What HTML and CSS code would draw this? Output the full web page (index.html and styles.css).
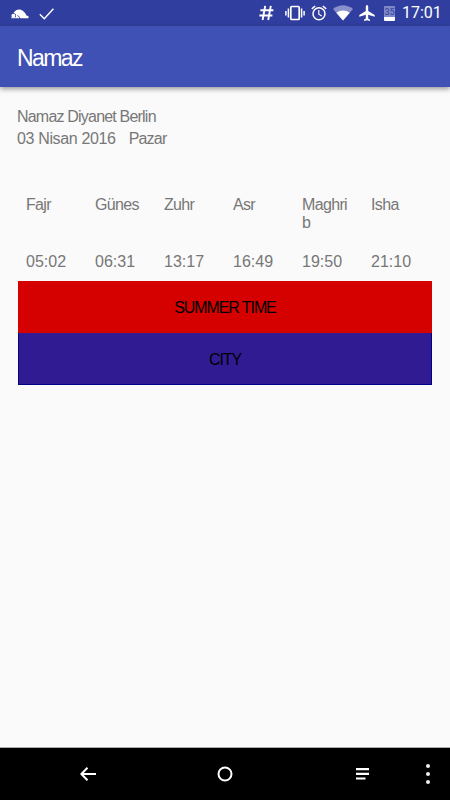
FILE: index.html
```html
<!doctype html>
<html lang="tr">
<head>
  <meta charset="utf-8">
  <title>Namaz</title>
  <link rel="stylesheet" href="styles.css">
</head>
<body>
  <div class="status-bar">
    <svg class="icon-pray" width="18" height="10" viewBox="0 0 18 10" fill="#fff">
      <circle cx="2.400" cy="6.800" r="2"/>
      <path d="M2.600 3.800L5 1.200C7.500 0 10 .2 12 2c1.700 1.300 2.700 2.600 3.200 4.200l2.300 1v2H9L8.400 7.800 6.800 6.200 6 6.600 8 8.200v1H.3V8.200h4.700L5 5.500z"/>
    </svg>
    <svg class="icon-check" width="16" height="12" viewBox="0 0 16 12" fill="none" stroke="#fff" stroke-width="1.400">
      <path d="M.8 6.300L5.300 10.700 14.400.8"/>
    </svg>
    <div class="status-right">
      <svg class="icon-hash" width="16" height="16" viewBox="0 0 16 16" fill="none" stroke="#fff" stroke-width="1.900">
        <path d="M6.200.8L3.600 15M11.800.8L9.200 15M1.400 5.300h13M.4 10.500h13"/>
      </svg>
      <svg class="icon-vibrate" width="20" height="16" viewBox="0 0 20 16">
        <rect x="5.800" y="1.500" width="8.400" height="13" rx="1" fill="none" stroke="#fff" stroke-width="1.700"/>
        <path d="M3.400 3.500v9M16.600 3.500v9M.9 6v4.500M19.100 6v4.500" stroke="#fff" stroke-width="1.500"/>
      </svg>
      <svg class="icon-alarm" width="16" height="16" viewBox="0 0 16 16" fill="none" stroke="#fff">
        <circle cx="8" cy="8.700" r="6" stroke-width="1.500"/>
        <path d="M.8 3.800L4.200 1M15.200 3.800L11.800 1" stroke-width="1.500"/>
        <path d="M7.800 5v4.200l3 1.800" stroke-width="1.200"/>
      </svg>
      <svg class="icon-wifi" width="20" height="16" viewBox="0 0 20 16">
        <path d="M0 4Q10-3.500 20 4L10 15.500z" fill="#8990cb"/>
        <path d="M3.300 7.800Q10 3.400 16.700 7.800L10 15.500z" fill="#fff"/>
      </svg>
      <svg class="icon-plane" width="16" height="16" viewBox="0 0 16 16" fill="#fff">
        <path d="M9.200 6V1.600a1.200 1.600 0 0 0-2.400 0V6L.3 10v1.800l6.500-2v3.800L5 14.800V16l3-.8 3 .8v-1.200l-1.800-1.200V9.800l6.500 2V10z"/>
      </svg>
      <div class="battery"><span class="battery-level">35</span></div>
      <span class="clock">17:01</span>
    </div>
  </div>

  <header class="toolbar">Namaz</header>

  <main class="content">
    <div class="heading">Namaz Diyanet Berlin</div>
    <div class="heading date"><span class="day-month">03 Nisan 2016</span><span>Pazar</span></div>

    <div class="times">
      <div class="name">Fajr</div>
      <div class="name">Günes</div>
      <div class="name">Zuhr</div>
      <div class="name">Asr</div>
      <div class="name">Maghrib</div>
      <div class="name">Isha</div>
      <div class="time">05:02</div>
      <div class="time">06:31</div>
      <div class="time">13:17</div>
      <div class="time">16:49</div>
      <div class="time">19:50</div>
      <div class="time">21:10</div>
    </div>

    <div class="buttons">
      <button class="btn summer">SUMMER TIME</button>
      <button class="btn city">CITY</button>
    </div>
  </main>

  <nav class="nav-bar">
    <svg class="nav-back" width="16" height="14" viewBox="0 0 16 14" fill="none" stroke="#fff" stroke-width="2">
      <path d="M16 7H1.500M7.500.8L1.300 7l6.200 6.200"/>
    </svg>
    <svg class="nav-home" width="16" height="16" viewBox="0 0 16 16" fill="none" stroke="#fff" stroke-width="2">
      <circle cx="8" cy="8" r="6.500"/>
    </svg>
    <svg class="nav-recent" width="13" height="12" viewBox="0 0 13 12" fill="#fff">
      <path d="M0 0h13v2.200H0zM0 4.700h13v2.200H0zM0 9.400h9.500v2.200H0z"/>
    </svg>
    <svg class="nav-more" width="4" height="20" viewBox="0 0 4 20" fill="#eee">
      <circle cx="2" cy="2" r="2"/>
      <circle cx="2" cy="10" r="2"/>
      <circle cx="2" cy="18" r="2"/>
    </svg>
  </nav>
</body>
</html>
```
FILE: styles.css
```css
body {
  margin: 0;
  height: 800px;
  display: flex;
  flex-direction: column;
  overflow: hidden;
  background: #fafafa;
  font-family: "Liberation Sans", Arial, sans-serif;
  color: #777;
}

svg {
  display: block;
  flex: none;
}

/* Status bar */
.status-bar {
  display: flex;
  align-items: center;
  height: 26px;
  box-sizing: border-box;
  padding: 0 9px 0 11px;
  background: #303f9f;
  color: #fff;
}

.icon-pray {
  margin-top: 1px;
}

.icon-check {
  margin: 1px 0 0 10px;
}

.status-right {
  display: flex;
  align-items: center;
  margin-left: auto;
}

.icon-vibrate { margin-left: 10px; }
.icon-alarm { margin-left: 6px; }
.icon-wifi { margin-left: 6px; }
.icon-plane { margin-left: 6px; }

.battery {
  width: 11px;
  height: 15px;
  margin-left: 9px;
  border-radius: 1px;
  background: linear-gradient(#7f88c7 11px, #fff 11px);
}

.battery-level {
  display: block;
  text-align: center;
  font: 9px/13px Roboto, sans-serif;
  color: #303f9f;
}

.clock {
  width: 39px;
  margin-left: 7px;
  font: 400 16px/28px Roboto, sans-serif;
  white-space: nowrap;
}

/* Toolbar */
.toolbar {
  height: 61px;
  padding-left: 17px;
  background: #3f51b5;
  box-shadow: 0 2px 5px rgba(0, 0, 0, 0.4);
  color: #fff;
  font-size: 23px;
  line-height: 64px;
  letter-spacing: -1.6px;
}

/* Content */
.content {
  flex: 1;
  padding: 19px 18px 0;
}

.heading {
  margin-left: -1px;
  font-size: 16px;
  line-height: 22px;
  letter-spacing: -0.8px;
}

.date {
  display: flex;
  gap: 13px;
}

.day-month {
  letter-spacing: -0.35px;
}

.times {
  display: grid;
  grid-template-columns: repeat(6, 69px);
  grid-template-rows: 57px 28px;
  padding-top: 46px;
  font-size: 16px;
  line-height: 18px;
  letter-spacing: -0.65px;
}

.name,
.time {
  padding: 0 14px 0 8px;
}

.name {
  word-break: break-all;
}

.time {
  letter-spacing: 0;
}

/* Buttons */
.btn {
  display: block;
  box-sizing: border-box;
  width: 100%;
  height: 52px;
  padding: 2px 0 0;
  border: 0;
  font: inherit;
  font-size: 16px;
  letter-spacing: -1.1px;
  color: #000;
}

.summer {
  background: #d50000;
}

.city {
  background: #311b92;
  border: solid #00008b;
  border-width: 0 1px 1px;
}

/* Navigation bar */
.nav-bar {
  display: flex;
  align-items: center;
  height: 52px;
  padding: 0 20px 0 80px;
  border-top: 1px solid #aaa;
  background: #000;
}

.nav-home { margin-left: 121px; }
.nav-recent { margin-left: 123px; }
.nav-more { margin-left: auto; }
```
